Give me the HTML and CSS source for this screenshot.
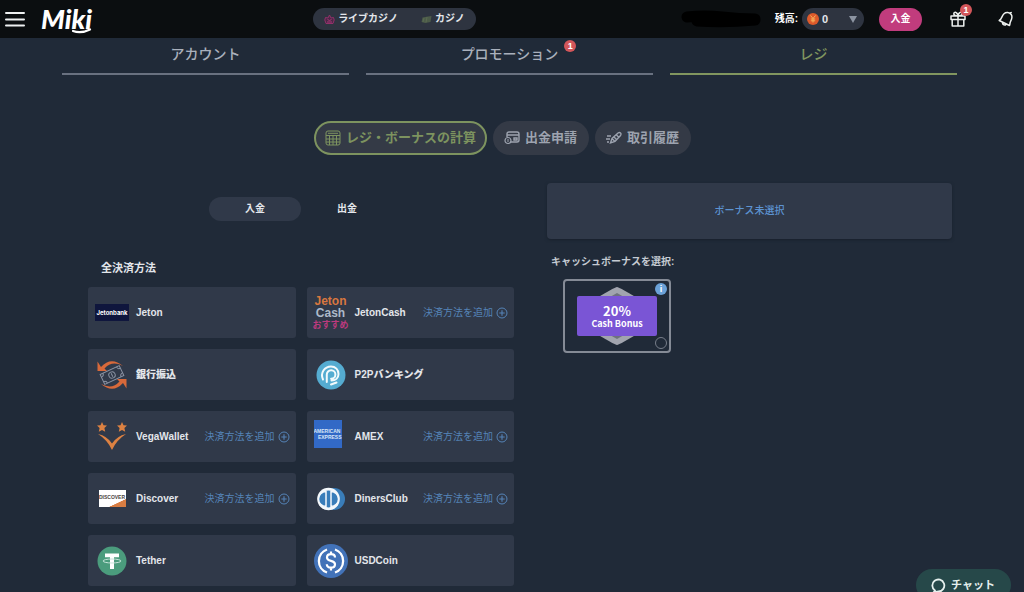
FILE: index.html
```html
<!DOCTYPE html>
<html lang="ja">
<head>
<meta charset="utf-8">
<meta name="viewport" content="width=device-width, initial-scale=1">
<title>Miki - レジ</title>
<link rel="stylesheet" href="styles.css">
</head>
<body>
<svg class="defs" aria-hidden="true">
  <symbol id="plus" viewBox="0 0 12 12"><circle cx="6" cy="6" r="5" fill="none" stroke="currentColor"/><path d="M6 3.3v5.4M3.300 6h5.400" stroke="currentColor" stroke-width="1.100"/></symbol>
</svg>
<header class="topbar">
  <div class="topbar-left">
    <button class="icon-button menu" aria-label="メニュー">
      <svg width="20" height="16" viewBox="0 0 20 16"><path d="M1 2h18M1 8.500h18M1 14.500h18" stroke="#eef0f1" stroke-width="2" stroke-linecap="round"/></svg>
    </button>
    <a class="logo" href="#">Miki<svg class="swoosh" width="20" height="6" viewBox="0 0 20 6"><path d="M1 3Q9 6 18 1.500" fill="none" stroke="#fff" stroke-width="2.200" stroke-linecap="round"/></svg></a>
  </div>
  <nav class="modes">
    <a href="#"><svg width="11" height="11" viewBox="0 0 11 11"><path d="M2 9.500L.8 6 1.500 3.500 4 4l1.500-3L7 4l2.500-.5.700 2.500L9 9.500z" fill="#4b2847" stroke="#93306a"/><path d="M3.500 5.500q2 2 4 0M3 8h5" fill="none" stroke="#a83676"/></svg>ライブカジノ</a>
    <a href="#"><svg width="11" height="11" viewBox="0 0 11 11"><path d="M1.500 3.500L7 2.500l3.500-.5-1 6L4 9 .5 8z" fill="#4c5b49"/><path d="M2 8l1-4M5 8.500l1-5.500" stroke="#607155" stroke-width=".7"/></svg>カジノ</a>
  </nav>
  <div class="topbar-right">
    <svg class="hidden-name" width="82" height="18" viewBox="0 0 82 18" aria-hidden="true"><path d="M7 7Q25 5 42 7T75 9M17 11Q45 13 75 10" fill="none" stroke="#000" stroke-width="11" stroke-linecap="round"/></svg>
    <label class="balance-label" for="balance">残高:</label>
    <div class="balance">
      <svg class="coin" width="12" height="12" viewBox="0 0 12 12"><circle cx="6" cy="6" r="6" fill="#dd5a2b"/><path d="M3.500 2.500L6 5.500l2.500-3M6 5.500v4M3.800 6h4.400M3.800 7.800h4.400" fill="none" stroke="#f5b45c"/></svg>
      <select id="balance"><option>0</option></select>
      <svg class="caret" width="8" height="7" viewBox="0 0 8 7"><path d="M0 0h8L4 7z" fill="#8d95a2"/></svg>
    </div>
    <button class="deposit">入金</button>
    <button class="icon-button gift" aria-label="ギフト">
      <svg width="16" height="16" viewBox="0 0 16 16"><path d="M1 5h14v3.500H1zM2.200 8.500h11.600V15H2.200zM8 5v10M8 5C2 5 3.500.5 6 1.500 7.500 2 8 5 8 5zM8 5c6 0 4.500-4.500 2-3.500C8.500 2 8 5 8 5z" fill="none" stroke="#edf0ee" stroke-width="1.500" stroke-linejoin="round"/></svg>
      <span class="badge">1</span>
    </button>
    <button class="icon-button" aria-label="お知らせ">
      <svg width="16" height="16" viewBox="0 0 16 16"><path d="M1.200 9.500C4 8 3.500 5 6 2.800 8 1 11.500 1.200 13.200 3.500 15 6 13.500 8.500 12.500 10.500 11.800 12 12 13.500 11.500 14.500zM4.500 12q.3 2.300 3 2M12 2.500l1.200-1" fill="none" stroke="#edf0ee" stroke-width="1.500" stroke-linejoin="round" stroke-linecap="round"/></svg>
    </button>
  </div>
</header>

<main>
  <nav class="tabs">
    <a href="#">アカウント</a>
    <a href="#"><span class="tab-text">プロモーション<span class="badge">1</span></span></a>
    <a class="active" href="#">レジ</a>
  </nav>

  <nav class="pills">
    <button class="pill active"><svg width="16" height="16" viewBox="0 0 16 16"><path d="M3 1h10q2 0 2 2v10q0 2-2 2H3q-2 0-2-2V3q0-2 2-2zM1 5.500h14M1 9h14M1 12h14M4.500 5.500V15M8 5.500V15M11.500 5.500V15M3 3.300h10" fill="none" stroke="currentColor"/></svg>レジ・ボーナスの計算</button>
    <button class="pill"><svg width="16" height="14" viewBox="0 0 16 14"><path d="M3 6V3q0-2 2-2h8q2 0 2 2v6q0 2-2 2H7M3 4h12M10 7h3v2h-3z" fill="none" stroke="currentColor" stroke-width="1.400"/><circle cx="4" cy="9.500" r="3" fill="none" stroke="currentColor" stroke-width="1.200"/><path d="M4 8v3" stroke="currentColor"/></svg>出金申請</button>
    <button class="pill"><svg width="16" height="14" viewBox="0 0 16 14"><path d="M4.500 12L6 7.500l6-5.500q1.500-1 2.500 0t0 2.500L9 10.500zM6 7.500l3 3M8 6l3 3M10.500 4l2.500 2.500M1 5h4M0 8h4M1 11h2" fill="none" stroke="currentColor" stroke-width="1.400"/></svg>取引履歴</button>
  </nav>

  <div class="content">
    <section class="payments">
      <div class="switch">
        <button class="on">入金</button>
        <button>出金</button>
      </div>
      <h2>全決済方法</h2>
      <ul class="methods">
        <li><span class="mark"><span class="jetonbank">Jetonbank</span></span><strong>Jeton</strong></li>
        <li><span class="mark"><span class="jetoncash"><b>Jeton</b><b>Cash</b><i>おすすめ</i></span></span><strong>JetonCash</strong><a href="#">決済方法を追加<svg width="12" height="12"><use href="#plus"/></svg></a></li>
        <li><span class="mark"><svg width="30" height="32" viewBox="0 0 30 32"><path d="M4 8Q14-3 26 7 15 1 7.500 9.500L10 12H.5V2.500zM26 24Q16 35 4 25q11 6 18.500-2.500L20 20h9.500v9.500z" fill="#d8693a"/><g transform="rotate(-25 15 16)" fill="none" stroke="#8b93a3"><path d="M4.500 10.500h21v11h-21z"/><circle cx="15" cy="16" r="3.200"/><path d="M4.500 13.500q3 0 3-3M22.500 10.500q0 3 3 3M4.500 18.500q3 0 3 3M22.500 21.500q0-3 3-3M15 14v4"/></g></svg></span><strong>銀行振込</strong></li>
        <li><span class="mark"><svg width="30" height="30" viewBox="0 0 30 30"><circle cx="15" cy="15" r="14.500" fill="#55acd1"/><path d="M7 19.500C4 13 8.500 6.500 15 6.500c4.500 0 7.500 3.200 7.500 7.500 0 4-3 6.500-7 6.500M10.800 22v-7.500a4.300 4.300 0 1 1 4.300 4.300M15 24.500l5.500-2" fill="none" stroke="#f3fafc" stroke-width="2" stroke-linecap="round"/></svg></span><strong>P2Pバンキング</strong></li>
        <li><span class="mark"><svg width="30" height="30" viewBox="0 0 30 30"><path d="M5 0l1.500 3.200 3.500.4-2.600 2.500.8 3.700L5 8 1.800 9.800l.8-3.700L0 3.600 3.500 3.200zM25 0l1.500 3.200 3.500.4-2.600 2.500.8 3.700L25 8l-3.200 1.800.8-3.700L20 3.600l3.500-.4zM1 12q9 2 14 9.500Q20 14 29 12 19.500 18 15 28 10.500 18 1 12z" fill="#dc8142"/></svg></span><strong>VegaWallet</strong><a href="#">決済方法を追加<svg width="12" height="12"><use href="#plus"/></svg></a></li>
        <li><span class="mark amex-slot"><span class="amex"><span>AMERICAN</span><span>EXPRESS</span></span></span><strong>AMEX</strong><a href="#">決済方法を追加<svg width="12" height="12"><use href="#plus"/></svg></a></li>
        <li><span class="mark"><span class="discover">DISCOVER</span></span><strong>Discover</strong><a href="#">決済方法を追加<svg width="12" height="12"><use href="#plus"/></svg></a></li>
        <li><span class="mark"><svg width="28" height="24" viewBox="0 0 28 24"><circle cx="17" cy="12" r="11" fill="#397db9"/><circle cx="11.500" cy="12" r="11.300" fill="#f4f8fb"/><circle cx="11.500" cy="12" r="8.500" fill="#397db9"/><path d="M9 4.500v15a7.500 7.500 0 0 1 0-15zM14 4.500v15a7.500 7.500 0 0 0 0-15z" fill="#397db9" stroke="#f4f8fb" stroke-width="1.500"/></svg></span><strong>DinersClub</strong><a href="#">決済方法を追加<svg width="12" height="12"><use href="#plus"/></svg></a></li>
        <li><span class="mark"><svg width="30" height="30" viewBox="0 0 30 30"><circle cx="15" cy="15" r="14.500" fill="#4b9c7d"/><path d="M8 7.500h14v3.700h-5V23h-4V11.200H8z" fill="#fff"/><ellipse cx="15" cy="15" rx="9" ry="2" fill="none" stroke="#c7e4da"/></svg></span><strong>Tether</strong></li>
        <li><span class="mark"><svg width="34" height="34" viewBox="0 0 34 34"><circle cx="17" cy="17" r="17" fill="#4272b8"/><path d="M13 5.500a12.200 12.200 0 0 0 0 23M21 5.500a12.200 12.200 0 0 1 0 23" fill="none" stroke="#fff" stroke-width="2.300"/><path d="M21 13.500q0-3.300-4-3.300t-4 3.200q0 2.600 4 3.400t4 3.500q0 3.400-4 3.400t-4.200-3.400M17 7.500v3M17 23.500v3" fill="none" stroke="#fff" stroke-width="2.200"/></svg></span><strong>USDCoin</strong></li>
      </ul>
    </section>

    <section class="bonus">
      <a class="bonus-state" href="#">ボーナス未選択</a>
      <h3>キャッシュボーナスを選択:</h3>
      <label class="bonus-card">
        <svg class="hexagon" width="54" height="58" viewBox="0 0 54 58"><path d="M27 0Q29 0 54 15v28Q29 58 27 58T0 43V15Q25 0 27 0z" fill="#a1a4ae"/><path d="M27 6L48 18v22L27 52 6 40V18z" fill="#6e727d"/></svg>
        <span class="bonus-name"><span class="percent">20%</span><span>Cash Bonus</span></span>
        <span class="info">i</span>
        <input type="radio" name="bonus">
      </label>
    </section>
  </div>
</main>

<button class="chat"><svg width="15" height="15" viewBox="0 0 15 15"><path d="M4 12.500A6 6 0 1 1 7.500 13.500L2.500 14.500z" fill="none" stroke="#e6f0ee" stroke-width="1.800" stroke-linejoin="round"/></svg>チャット</button>
</body>
</html>
```

FILE: styles.css
```css
* { box-sizing: border-box; }

body {
  margin: 0;
  background: #202a38;
  color: #e3e6eb;
  font: 700 10px/16px "Liberation Sans", "Noto Sans CJK JP", sans-serif;
}

a { color: inherit; text-decoration: none; }
button, select, input { font: inherit; color: inherit; margin: 0; }
button { border: 0; padding: 0; background: none; cursor: pointer; }
svg { display: block; flex: none; }
h2, h3, ul { margin: 0; padding: 0; }
.defs { position: absolute; width: 0; height: 0; }

/* Header */
.topbar {
  display: grid;
  grid-template-columns: 313fr auto 548fr;
  align-items: center;
  height: 38px;
  background: #0b0e10;
}
.topbar-left, .topbar-right { display: flex; align-items: center; }
.topbar-left { padding-left: 5px; gap: 16px; }
.topbar-right { justify-content: flex-end; padding-right: 10px; }
.icon-button { position: relative; }
.logo {
  position: relative;
  color: #fff;
  font: italic 900 27px/30px Lato, sans-serif;
}
.swoosh { position: absolute; right: 0; bottom: 0; }
.modes {
  display: flex;
  gap: 23px;
  height: 22px;
  padding: 0 11px;
  border-radius: 11px;
  background: #2e3440;
}
.modes a { display: flex; align-items: center; gap: 3px; }
.hidden-name { margin-right: 13px; }
.balance-label { margin-right: 4px; color: #fff; }
.balance { position: relative; width: 62px; }
.balance select {
  display: block;
  width: 100%;
  height: 22px;
  padding: 0 0 0 20px;
  border: 0;
  border-radius: 11px;
  background: #2e3440;
  font-size: 11px;
  appearance: none;
}
.coin { position: absolute; left: 5px; top: 5px; }
.caret { position: absolute; right: 7px; top: 8px; pointer-events: none; }
.deposit {
  width: 43px;
  height: 23px;
  margin: 0 28px 0 15px;
  border-radius: 12px;
  background: #c13c7d;
  color: #fff;
}
.gift { margin-right: 32px; }
.badge {
  position: absolute;
  width: 12px;
  height: 12px;
  border-radius: 6px;
  background: #d3565a;
  color: #fff;
  font-size: 9px;
  line-height: 12px;
  text-align: center;
}
.gift .badge { right: -6px; top: -7px; }

/* Main tabs */
main { padding: 0 67px 6px 62px; }
.tabs {
  display: grid;
  grid-template-columns: repeat(3, 1fr);
  gap: 17px;
  text-align: center;
  font-size: 14px;
  font-weight: 500;
  line-height: 20px;
  color: #a9b0bc;
}
.tabs a { padding: 6px 0 9px; border-bottom: 2px solid #697180; }
.tabs .active { color: #81965f; border-color: #81965f; }
.tab-text { position: relative; }
.tabs .badge { right: -18px; top: -6px; font-weight: 700; }

.pills {
  display: flex;
  justify-content: center;
  gap: 6px;
  margin: 46px 0 28px;
  padding-right: 14px;
}
.pill {
  display: flex;
  align-items: center;
  gap: 5px;
  height: 34px;
  padding: 0 12px 0 11px;
  border-radius: 17px;
  background: #343a46;
  color: #9da3af;
  font-size: 13px;
}
.pill.active {
  padding: 0 9px;
  border: 2px solid #7d935f;
  color: #7d935f;
}

/* Payment methods */
.content {
  display: grid;
  grid-template-columns: 426fr 405fr;
  gap: 33px;
  padding: 0 5px 0 26px;
}
.payments { padding-top: 14px; }
.switch { display: flex; justify-content: center; }
.switch button { width: 92px; height: 24px; border-radius: 12px; }
.switch .on { background: #303949; }
h2 { margin: 38px 0 10px; padding-left: 13px; font-size: 11px; line-height: 18px; }
.methods {
  display: grid;
  grid-template-columns: 1fr 1fr;
  gap: 11px;
  list-style: none;
}
.methods li {
  display: flex;
  align-items: center;
  gap: 7px;
  height: 51px;
  padding: 0 6px 0 7px;
  border-radius: 3px;
  background: #303949;
}
.methods a {
  display: flex;
  align-items: center;
  gap: 3px;
  margin-left: auto;
  color: #5584b8;
  font-weight: 400;
  white-space: nowrap;
}
.mark { display: flex; flex: none; justify-content: center; width: 34px; }
.jetonbank {
  width: 34px;
  background: #0f163d;
  color: #fff;
  font: 700 6px/17px Inter, sans-serif;
  text-align: center;
}
.jetoncash {
  display: grid;
  font: 700 12px/12px "Liberation Sans", sans-serif;
  text-align: center;
  white-space: nowrap;
}
.jetoncash b:first-child { color: #d9773f; }
.jetoncash b + b { color: #adbac9; }
.jetoncash i {
  color: #bd3a7e;
  font: 700 9px/12px "Liberation Sans", "Noto Sans CJK JP", sans-serif;
}
.amex-slot { justify-content: flex-start; }
.amex {
  display: grid;
  align-content: center;
  width: 28px;
  height: 28px;
  margin-bottom: 6px;
  overflow: hidden;
  background: #3269c6;
  color: #d8e5f7;
  font-size: 5px;
  line-height: 6px;
}
.amex span + span { text-align: right; }
.discover {
  width: 27px;
  height: 17px;
  background: linear-gradient(155deg, #fff 72%, #d87d43 74%);
  color: #4b4544;
  font-size: 5px;
  line-height: 15px;
  text-align: center;
}

/* Bonus */
.bonus-state {
  display: grid;
  place-items: center;
  height: 56px;
  border-radius: 4px;
  background: #303949;
  box-shadow: 0 1px 3px #18202c;
  color: #5c93d1;
  font-weight: 500;
}
h3 { margin: 15px 0 9px; padding-left: 4px; font-size: 10px; line-height: 16px; color: #c5cad2; }
.bonus-card {
  position: relative;
  display: grid;
  place-items: center;
  width: 108px;
  height: 74px;
  margin-left: 16px;
  border: 2px solid #858b96;
  border-radius: 4px;
}
.hexagon { position: absolute; }
.bonus-name {
  position: relative;
  display: grid;
  align-content: center;
  width: 80px;
  height: 40px;
  border-radius: 2px;
  background: #7a55d5;
  color: #fff;
  font: 700 9px/12px "Noto Sans CJK JP", sans-serif;
  text-align: center;
}
.percent { font-size: 13px; line-height: 15px; }
.info {
  position: absolute;
  top: 2px;
  right: 2px;
  width: 12px;
  height: 12px;
  border-radius: 6px;
  background: #6ba2d8;
  color: #fff;
  font-size: 9px;
  line-height: 12px;
  text-align: center;
}
.bonus-card input {
  position: absolute;
  right: 2px;
  bottom: 2px;
  width: 12px;
  height: 12px;
  border: 1px solid #777e8a;
  border-radius: 6px;
  appearance: none;
}

/* Chat launcher */
.chat {
  position: fixed;
  right: 13px;
  bottom: -9px;
  display: flex;
  align-items: center;
  gap: 5px;
  height: 32px;
  padding: 0 16px 0 15px;
  border-radius: 16px;
  background: #264849;
  color: #e6f0ee;
  font-size: 11px;
}
```
